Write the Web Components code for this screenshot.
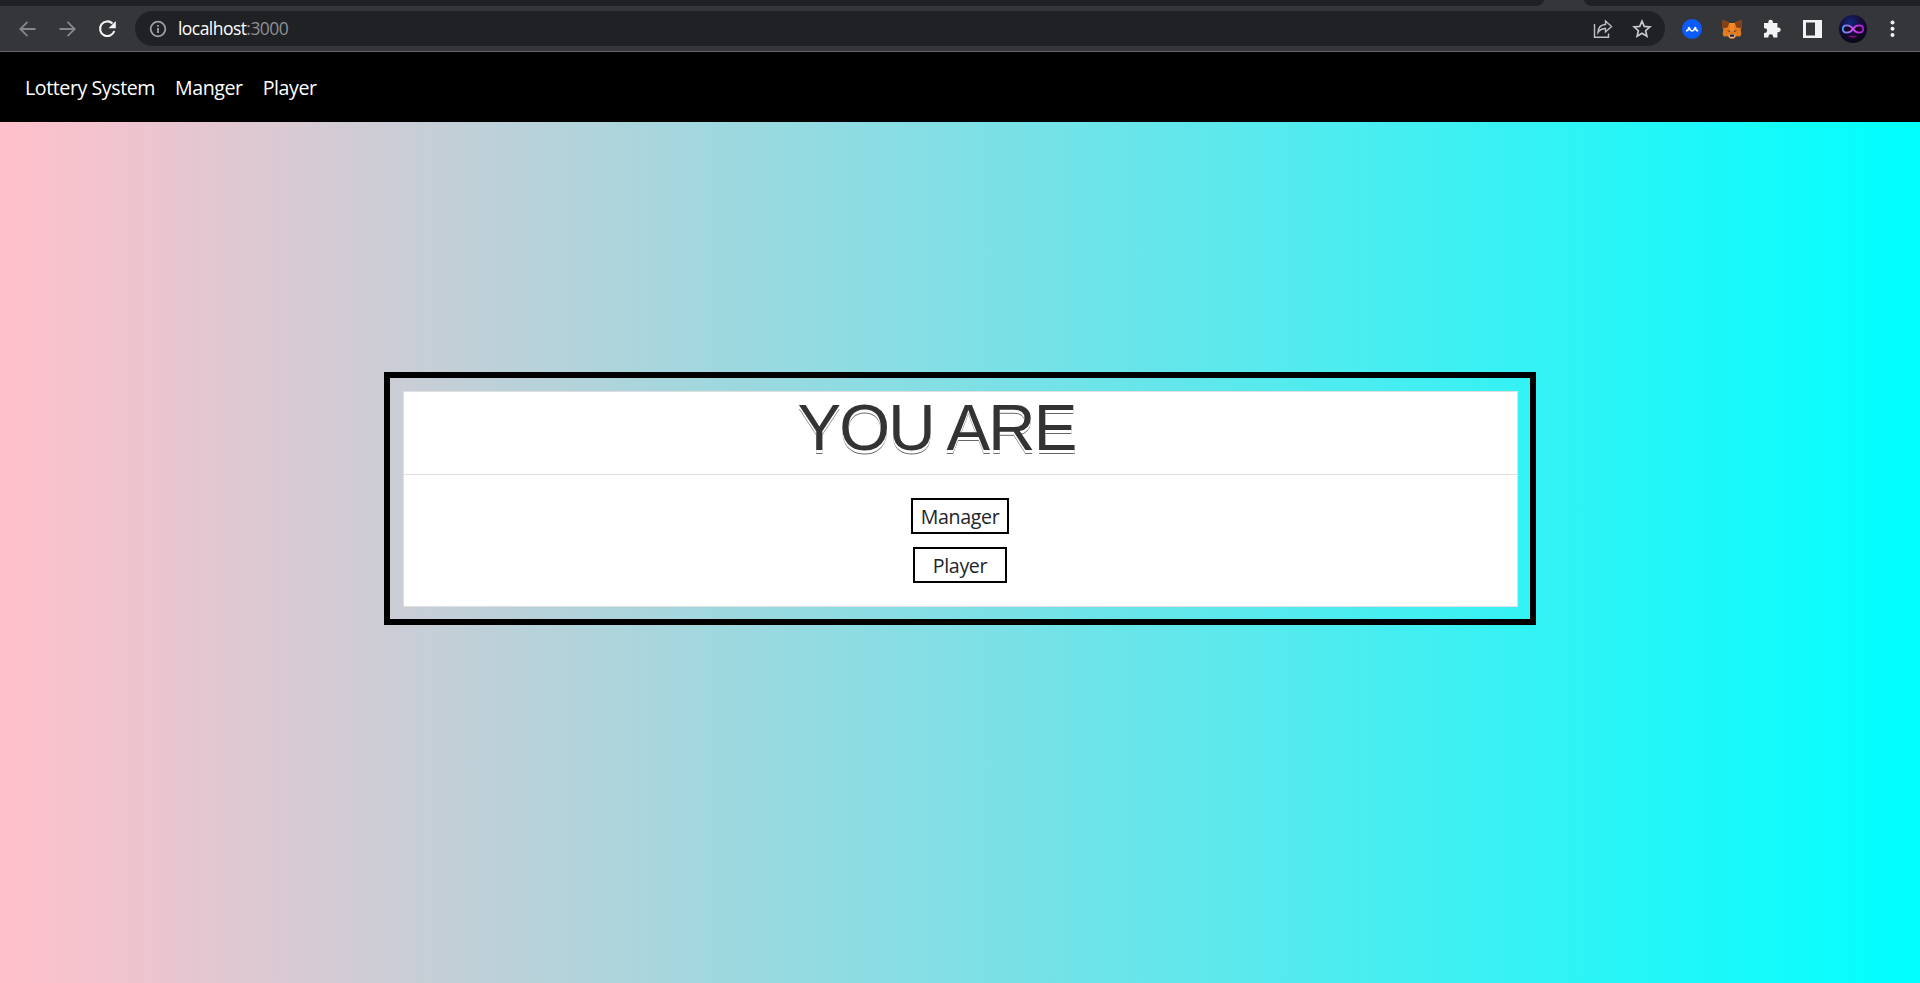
<!DOCTYPE html>
<html lang="en">
<head>
<meta charset="utf-8">
<title>Lottery System</title>
<style>
html,body{margin:0;height:100%;overflow:hidden}
body{font-family:"Open Sans","Noto Sans",sans-serif}
</style>
</head>
<body>
<lottery-window></lottery-window>
<script>
function define(name, html){
  const t=document.createElement('template');
  t.innerHTML=html;
  customElements.define(name,class extends HTMLElement{
    constructor(){super();this.attachShadow({mode:'open'}).append(t.content.cloneNode(true));}
  });
}

define('tab-strip',`<style>
:host{display:flex;height:6px;background:#35363a}
div{background:#202124}
.l{width:1544px;border-bottom-right-radius:9px 6px}
.gap{width:40px;background:none}
.r{flex:1;border-bottom-left-radius:9px 6px}
</style><div class="l"></div><div class="gap"></div><div class="r"></div>`);

define('address-bar',`<style>
:host{display:flex;align-items:center;box-sizing:border-box;width:1530px;height:35px;border-radius:18px;background:#202124;padding:0 13px 0 14px;flex:none}
svg{display:block;flex:none}
.url{flex:1;margin-left:11px;font-size:17.5px;line-height:33px;padding-bottom:1px;letter-spacing:-.55px;color:#fff;white-space:nowrap}
.url span{color:#8c9095}
.share{margin-right:19px}
</style>
<svg width="18" height="18" viewBox="0 0 18 18" fill="none" stroke="#9aa0a6" stroke-width="1.8"><circle cx="9" cy="9" r="7.3"/><path d="M9 8v5M9 5v1.8"/></svg>
<div class="url"><b style="font-weight:400">localhost</b><span>:3000</span></div>
<svg class="share" width="20" height="20" viewBox="0 0 20 20" fill="none" stroke="#bdc1c6" stroke-width="1.4"><path d="M1.500 5v13.300h14V14.500"/><path d="M5 13.500C5.200 8.500 8 5.700 12.500 5.500V2L18.500 7.500 12.500 13V9.500C9.300 9.400 7 10.600 5 13.500z"/></svg>
<svg width="20" height="20" viewBox="0 0 20 20" fill="none" stroke="#c6c9cc" stroke-width="1.700"><path d="M10 2.200l2.250 5.250 5.650.5-4.300 3.750 1.300 5.600L10 14.350 5.100 17.300l1.300-5.600L2.100 7.950l5.650-.5z"/></svg>`);

define('browser-toolbar',`<style>
:host{display:flex;align-items:center;box-sizing:border-box;height:46px;background:#35363a;border-bottom:1px solid #656866;padding-left:18px}
svg{display:block;flex:none}
address-bar{margin:0 17px 0 16px}
</style>
<svg width="20" height="20" viewBox="0 0 20 20" fill="none" stroke="#85878a" stroke-width="1.800"><path d="M17.500 10H2.500M9.500 2.800L2.300 10l7.200 7.200"/></svg>
<svg style="margin-left:20px" width="20" height="20" viewBox="0 0 20 20" fill="none" stroke="#85878a" stroke-width="1.800"><path d="M1.500 10h15M9.500 2.800l7.200 7.200-7.200 7.200"/></svg>
<svg style="margin-left:19px" width="22" height="20" viewBox="0 0 22 20"><path d="M15.500 4.500A7.300 7.300 0 1 0 17.300 12" fill="none" stroke="#f1f3f4" stroke-width="2.100"/><path d="M18.800 2v7.200h-7.200z" fill="#f1f3f4"/></svg>
<address-bar></address-bar>
<svg width="20" height="20" viewBox="0 0 20 20"><circle cx="10" cy="10" r="10" fill="#0b5cff"/><path d="M4 11.700h1.100C6.600 11.700 6.300 8.600 7 8.600S7.600 12 10.100 12 12.600 8.600 13.300 8.600 13.500 11.700 15 11.700h1.200" fill="none" stroke="#fff" stroke-width="1.700"/></svg>
<svg style="margin-left:20px" width="20" height="20" viewBox="0 0 20 20"><path d="M.8 1l6.500 3h5.400l6.500-3 .5 6-1 4 .7 4-1.200 2.500-4-.3-2.200 2.600H8l-2.200-2.600-4 .3L.6 15l.7-4-1-4z" fill="#e57b20"/><path d="M.8 1l6.500 3-1.800 4.500L.8 9.300 0 7zM19.200 1l-6.500 3 1.800 4.500 4.700.8.800-2.300z" fill="#873f14"/><path d="M7.300 4h5.400l-1 8H8.300z" fill="#f18a24"/><path d="M4.600 11.200l3 .5.400 1.500zM15.400 11.200l-3 .5-.4 1.500z" fill="#29313a"/><path d="M6.500 16L8 15h4l1.500 1-.8 2-1.200 1h-3l-1.200-1z" fill="#d5bfb2"/><path d="M8 15.500h4l.3 1.500-.8 .8h-3l-.8-.8z" fill="#241d1c"/></svg>
<svg style="margin-left:20px" width="20" height="20" viewBox="0 0 20 20"><path d="M2 4h4.300V3a2.300 2.300 0 0 1 4.600 0v1h4.500v4.500h1a2.350 2.350 0 0 1 0 4.700h-1v5.300h-4.200v-.8a2.400 2.400 0 0 0-4.800 0v.8H2v-4.600h.8a2.350 2.350 0 0 0 0-4.700H2z" fill="#f1f3f4"/></svg>
<svg style="margin-left:21px" width="19" height="18" viewBox="0 0 19 18"><path fill-rule="evenodd" fill="#f1f3f4" d="M0 0h19v18H0zM3 2.500v13h9v-13z"/></svg>
<svg style="margin-left:17px" width="28" height="28" viewBox="0 0 28 28"><defs><radialGradient id="g" cx=".4" cy=".28" r=".7"><stop stop-color="#102a78"/><stop offset=".6" stop-color="#180936"/><stop offset="1" stop-color="#090819"/></radialGradient><linearGradient id="n" gradientUnits="userSpaceOnUse" x1="3" y1="0" x2="25" y2="0"><stop stop-color="#45a7f1"/><stop offset=".5" stop-color="#d44bed"/><stop offset="1" stop-color="#a51bd2"/></linearGradient></defs><circle cx="14" cy="14" r="14" fill="url(#g)"/><path d="M14 14C11 9.500 4 9 3.800 14S11 18.500 14 14c3-4.500 10-5 10.200 0S17 18.500 14 14z" fill="#170627" stroke="url(#n)" stroke-width="1.800"/><path d="M9 21.300q5-1.400 9 0-4 2.800-9 0z" fill="#74106f"/></svg>
<svg style="margin-left:23px" width="5" height="18" viewBox="0 0 5 18" fill="#f1f3f4"><circle cx="2.500" cy="2.600" r="2"/><circle cx="2.500" cy="8.800" r="2"/><circle cx="2.500" cy="15" r="2"/></svg>`);

define('nav-link',`<style>
:host{display:block;white-space:nowrap}
a{color:#fff;text-decoration:none}
</style><a><slot></slot></a>`);

define('site-nav',`<style>
:host{display:flex;align-items:center;box-sizing:border-box;height:70px;background:#000;padding:0 0 0 25px;font-size:19.6px;letter-spacing:-.42px;gap:20px}
</style><nav-link>Lottery System</nav-link><nav-link>Manger</nav-link><nav-link>Player</nav-link>`);

define('role-button',`<style>
:host{display:block;width:var(--w)}
button{display:block;box-sizing:border-box;width:100%;height:36px;padding:0;border:2px solid #000;background:#fff;color:#212529;font:19.6px/33px "Open Sans","Noto Sans",sans-serif;letter-spacing:-.35px;text-align:center;white-space:nowrap}
</style><button><slot></slot></button>`);

define('role-card',`<style>
:host{display:block;box-sizing:border-box;width:1152px;height:253px;border:6px solid #000;padding:13px 12px 12px 13px}
.card{display:flex;flex-direction:column;box-sizing:border-box;height:216px;border:1px solid #dfdfdf;background:#fff}
h1{box-sizing:border-box;height:83px;margin:0;padding:0 48px 0 0;border-bottom:1px solid #dfdfdf;font:400 65.4px/71px "Liberation Sans",Arial,sans-serif;letter-spacing:-1.8px;text-align:center;color:#333;text-shadow:0 3px 0 #fff,0 4px 0 #666}
.body{display:flex;flex-direction:column;align-items:center;gap:13px;padding:23px 1px 0 0}
</style><div class="card"><h1>YOU ARE</h1><div class="body"><role-button style="--w:98px">Manager</role-button><role-button style="--w:94px">Player</role-button></div></div>`);

define('lottery-window',`<style>
:host{display:flex;flex-direction:column;height:983px}
main{flex:1;display:flex;justify-content:center;align-items:flex-start;padding-top:250px;background:linear-gradient(to right,pink,cyan)}
</style><tab-strip></tab-strip><browser-toolbar></browser-toolbar><site-nav></site-nav><main><role-card></role-card></main>`);
</script>
</body>
</html>
